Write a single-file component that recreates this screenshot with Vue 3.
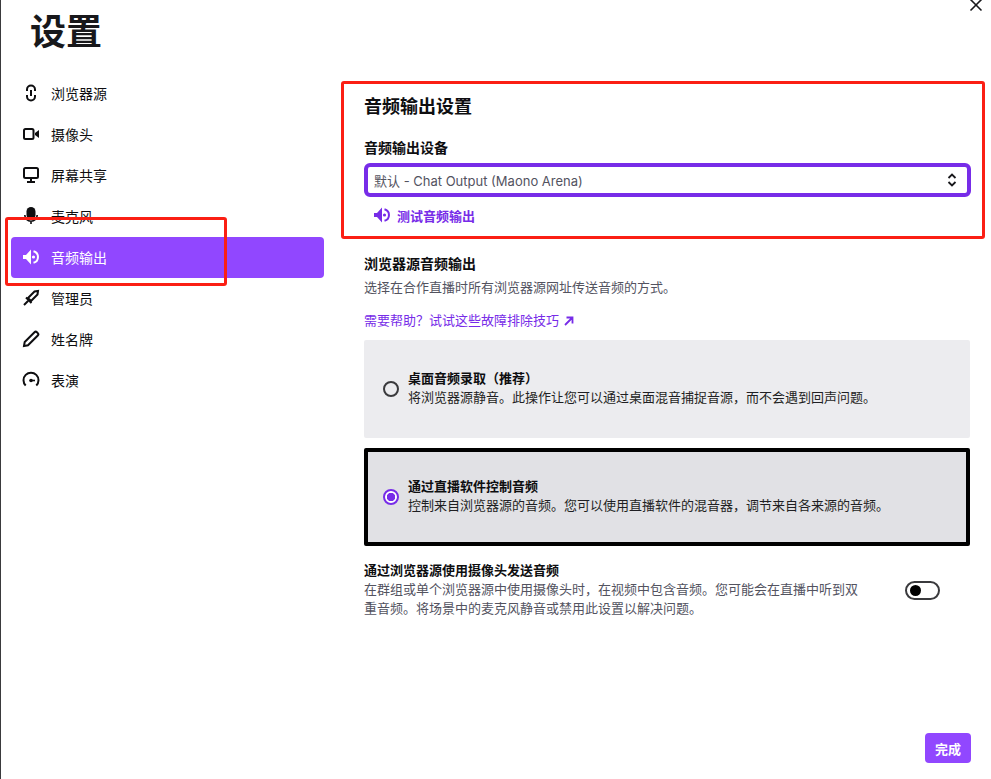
<script setup>
const navItems = [
  { label: '浏览器源', icon: 'link' },
  { label: '摄像头', icon: 'camera' },
  { label: '屏幕共享', icon: 'monitor' },
  { label: '麦克风', icon: 'mic' },
  { label: '音频输出', icon: 'speaker', active: true },
  { label: '管理员', icon: 'sword' },
  { label: '姓名牌', icon: 'pencil' },
  { label: '表演', icon: 'gauge' },
]
</script>

<template>
  <div class="app">
    <button class="close" aria-label="关闭">
      <svg width="14" height="14" viewBox="0 0 14 14"><path d="M1.5 1.5l11 11M12.5 1.5l-11 11" stroke="#18181b" stroke-width="1.6" fill="none" /></svg>
    </button>

    <header class="header"><h1 class="title">设置</h1></header>

    <div class="body">
      <nav class="sidebar">
        <a v-for="item in navItems" :key="item.label" class="nav-item" :class="{ active: item.active }">
          <svg class="nav-icon" width="20" height="20" viewBox="0 0 20 20">
            <g v-if="item.icon === 'link'" fill="none" stroke="currentColor" stroke-width="2">
              <path d="M6 8V6.500a4 4 0 0 1 8 0V8" />
              <path d="M6 12v1.500a4 4 0 0 0 8 0V12" />
              <path d="M10 7v6" />
            </g>
            <g v-else-if="item.icon === 'camera'">
              <rect x="3" y="5" width="9.500" height="10" rx="1.500" fill="none" stroke="currentColor" stroke-width="2" />
              <path d="M14 9l4-3v8l-4-3z" fill="currentColor" />
            </g>
            <g v-else-if="item.icon === 'monitor'">
              <rect x="3" y="3" width="14" height="10" rx="1.500" fill="none" stroke="currentColor" stroke-width="2" />
              <path d="M9 13h2v3h3v2H6v-2h3z" fill="currentColor" />
            </g>
            <g v-else-if="item.icon === 'mic'">
              <rect x="5.500" y="1" width="9" height="12.500" rx="4.500" fill="currentColor" />
              <path d="M3.800 9a6.200 6.200 0 0 0 12.400 0M10 15v3" fill="none" stroke="currentColor" stroke-width="1.600" />
            </g>
            <g v-else-if="item.icon === 'speaker'">
              <path d="M2 8h3l5-5.500v15L5 12H2z" fill="currentColor" />
              <path d="M12.500 4.200a6 6 0 0 1 0 11.600" fill="none" stroke="currentColor" stroke-width="2" />
              <circle cx="12.500" cy="10" r="1.600" fill="currentColor" />
            </g>
            <g v-else-if="item.icon === 'sword'">
              <path d="M17 3l-.5 3.500-6.500 6.500-3-3 6.500-6.500z" fill="none" stroke="currentColor" stroke-width="2" />
              <path d="M5 9.500l5.500 5.500M7 13l-4 4" fill="none" stroke="currentColor" stroke-width="2" />
            </g>
            <g v-else-if="item.icon === 'pencil'">
              <path d="M3 17l.7-4L13.500 3.200a1.700 1.700 0 0 1 2.400 0l.9.9a1.700 1.700 0 0 1 0 2.400L7 16.300z" fill="none" stroke="currentColor" stroke-width="2" />
            </g>
            <g v-else-if="item.icon === 'gauge'">
              <path d="M4.700 15.500a7.500 7.500 0 1 1 10.600 0" fill="none" stroke="currentColor" stroke-width="2" />
              <circle cx="10" cy="10.500" r="1.800" fill="currentColor" />
              <path d="M10 9.700h4v1.600h-4z" fill="currentColor" />
            </g>
          </svg>
          <span>{{ item.label }}</span>
        </a>
      </nav>

      <main class="main">
        <section class="output">
          <h2 class="heading">音频输出设置</h2>
          <label class="label">音频输出设备</label>
          <div class="select">
            <span>默认 - Chat Output (Maono Arena)</span>
            <svg width="12" height="16" viewBox="0 0 12 16"><path d="M2.500 6L6 2.500 9.500 6M2.500 10L6 13.500 9.500 10" fill="none" stroke="#18181b" stroke-width="1.800" /></svg>
          </div>
          <a class="test">
            <svg width="20" height="20" viewBox="0 0 20 20">
              <path d="M2 8h3l5-5.500v15L5 12H2z" fill="currentColor" />
              <path d="M12.500 4.200a6 6 0 0 1 0 11.600" fill="none" stroke="currentColor" stroke-width="2" />
              <circle cx="12.500" cy="10" r="1.600" fill="currentColor" />
            </svg>
            <span>测试音频输出</span>
          </a>
        </section>

        <section class="browser">
          <h3 class="sub">浏览器源音频输出</h3>
          <p class="muted">选择在合作直播时所有浏览器源网址传送音频的方式。</p>
          <a class="help">
            需要帮助&#xFF1F;试试这些故障排除技巧
            <svg width="12" height="12" viewBox="0 0 12 12"><path d="M2 10l7-7M3.500 2.500h6v6" fill="none" stroke="#772ce8" stroke-width="1.800" /></svg>
          </a>
        </section>

        <div class="card">
          <span class="radio"></span>
          <div class="card-text">
            <div class="card-title">桌面音频录取&#xFF08;推荐&#xFF09;</div>
            <div class="card-desc">将浏览器源静音。此操作让您可以通过桌面混音捕捉音源&#xFF0C;而不会遇到回声问题。</div>
          </div>
        </div>

        <div class="card selected">
          <span class="radio on"></span>
          <div class="card-text">
            <div class="card-title">通过直播软件控制音频</div>
            <div class="card-desc">控制来自浏览器源的音频。您可以使用直播软件的混音器&#xFF0C;调节来自各来源的音频。</div>
          </div>
        </div>

        <section class="camera">
          <div class="camera-text">
            <h3 class="sub">通过浏览器源使用摄像头发送音频</h3>
            <p class="muted wrap">在群组或单个浏览器源中使用摄像头时&#xFF0C;在视频中包含音频。您可能会在直播中听到双重音频。将场景中的麦克风静音或禁用此设置以解决问题。</p>
          </div>
          <span class="toggle"><i></i></span>
        </section>
      </main>
    </div>

    <footer class="footer"><button class="done">完成</button></footer>

    <div class="mark mark-nav"></div>
    <div class="mark mark-output"></div>
  </div>
</template>

<style>
html, body { margin: 0; background: #fff; }
</style>

<style scoped>
.app {
  position: relative;
  box-sizing: border-box;
  width: 991px;
  height: 779px;
  display: flex;
  flex-direction: column;
  overflow: hidden;
  border-left: 1px solid #3a3a3d;
  background: #fff;
  color: #0e0e10;
  font-family: Inter, "Noto Sans CJK SC", sans-serif;
  font-size: 13px;
}
.close {
  position: absolute;
  top: -2px;
  right: 8px;
  padding: 0;
  border: 0;
  background: none;
  line-height: 0;
}
.header { height: 73px; padding-left: 29px; }
.title { margin: 0; font-size: 36px; line-height: 64px; font-weight: 700; color: #18181b; }
.body { display: flex; }
.sidebar { width: 323px; padding-left: 10px; box-sizing: border-box; display: flex; flex-direction: column; flex: none; }
.nav-item {
  box-sizing: border-box;
  height: 41px;
  display: flex;
  align-items: center;
  gap: 10px;
  padding: 0 0 2px 10px;
  border-radius: 4px;
  font-size: 14px;
  color: #0e0e10;
}
.nav-item.active { background: #9147ff; color: #fff; }
.main { margin-left: 40px; width: 606px; flex: none; }
.heading { margin: 0; padding-top: 22px; font-size: 18px; line-height: 24px; font-weight: 600; }
.label { display: block; margin-top: 20px; font-size: 14px; line-height: 18px; font-weight: 600; }
.select {
  box-sizing: border-box;
  height: 34px;
  margin-top: 6px;
  width: 607px;
  padding: 0 9px 0 6px;
  display: flex;
  align-items: center;
  justify-content: space-between;
  border: 4px solid #772ce8;
  border-radius: 6px;
  color: #53535f;
  font-size: 13px;
}
.test { display: flex; align-items: center; gap: 5px; height: 20px; margin-top: 8px; padding-left: 8px; color: #772ce8; font-weight: 600; }
.browser { margin-top: 30px; }
.sub { margin: 0; font-size: 13px; line-height: 18px; font-weight: 600; }
.browser .sub { font-size: 14px; }
.muted { margin: 5px 0 0; color: #53535f; font-size: 13px; line-height: 19px; }
.help { display: flex; align-items: center; gap: 4px; margin-top: 14px; color: #772ce8; line-height: 19px; }
.card {
  box-sizing: border-box;
  height: 98px;
  margin-top: 10px;
  display: flex;
  align-items: center;
  gap: 9px;
  padding-left: 19px;
  border-radius: 2px;
  background: #ececef;
}
.card.selected { background: #e1e1e5; border: 4px solid #000; padding-left: 15px; }
.card-text { padding-bottom: 2px; }
.card-title { font-weight: 600; line-height: 19px; }
.card-desc { color: #1f1f23; line-height: 19px; }
.radio {
  box-sizing: border-box;
  width: 16px;
  height: 16px;
  border: 2px solid #3a3a3d;
  border-radius: 50%;
  flex: none;
}
.radio.on { border-color: #772ce8; background: radial-gradient(circle, #772ce8 0 4px, #fff 4.500px); }
.camera { display: flex; justify-content: space-between; align-items: center; margin-top: 15px; padding-right: 30px; }
.camera-text { width: 500px; }
.muted.wrap { margin-top: 1px; }
.toggle {
  box-sizing: border-box;
  width: 35px;
  height: 19px;
  padding: 2px 3px;
  border: 2px solid #3a3a3d;
  border-radius: 10px;
  display: block;
  margin-top: 2px;
}
.toggle i { display: block; width: 11px; height: 11px; border-radius: 50%; background: #000; }
.footer { margin-top: auto; padding: 0 20px 16px 0; display: flex; justify-content: flex-end; }
.done {
  width: 46px;
  height: 30px;
  padding: 0;
  border: 0;
  border-radius: 4px;
  background: #9147ff;
  color: #fff;
  font: 600 13px Inter, "Noto Sans CJK SC", sans-serif;
}
.mark { position: absolute; box-sizing: border-box; border: 3px solid #fb1f14; border-radius: 3px; pointer-events: none; }
.mark-nav { left: 4px; top: 217px; width: 222px; height: 69px; }
.mark-output { left: 340px; top: 81px; width: 644px; height: 158px; }
</style>
